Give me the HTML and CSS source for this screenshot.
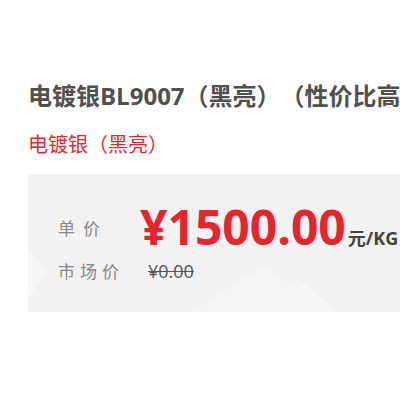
FILE: index.html
```html
<!DOCTYPE html>
<html lang="zh-CN">
<head>
  <meta charset="UTF-8" />
  <meta name="viewport" content="width=device-width, initial-scale=1.0"/>
  <title>电镀银BL9007</title>
  <link rel="stylesheet" href="styles.css">
</head>
<body>

  <div class="product">
    <h1 class="title">电镀银BL9007（黑亮）（性价比高）</h1>
    <p class="subtitle">电镀银（黑亮）</p>

    <div class="price-box">
      <svg class="deco" viewBox="0 0 372 138" preserveAspectRatio="none">
        <polygon points="0,73 19,97 0,125" fill="#f7f7f7" />
        <polygon points="162,138 235,93 307,138" fill="#f6f6f6" />
        <polygon points="240,138 277,110 310,138" fill="#f8f8f8" />
      </svg>
      <div class="row main">
        <span class="label wide">单价</span>
        <span class="amount"><span class="price">¥1500.00</span><span class="unit">元/KG</span></span>
      </div>
      <div class="row market">
        <span class="label">市场价</span>
        <span class="old-price">¥0.00</span>
      </div>
    </div>
  </div>

</body>
</html>
```

FILE: styles.css
```css
body {
  margin: 0;
  background: #fff;
  font-family: "Open Sans", "Noto Sans CJK SC", sans-serif;
  text-spacing-trim: space-all;
  overflow: hidden;
}
.product {
  padding: 78px 0 0 28px;
  white-space: nowrap;
  overflow: hidden;
}
.title {
  margin: 0;
  font-size: 24px;
  line-height: 36px;
  font-weight: bold;
  color: #505050;
}
.subtitle {
  margin: 16px 0 0;
  font-size: 20px;
  line-height: 30px;
  color: #dd2a33;
}
.price-box {
  position: relative;
  margin-top: 14px;
  height: 138px;
  padding: 29px 0 0 30px;
  box-sizing: border-box;
  background: #f2f2f2;
}
.deco {
  position: absolute;
  left: 0;
  top: 0;
  width: 372px;
  height: 138px;
}
.row {
  position: relative;
  display: flex;
  align-items: baseline;
}
.row.main {
  align-items: center;
  height: 48px;
}
.row.market {
  margin-top: 7px;
}
.label {
  width: 90px;
  font-size: 17px;
  color: #888;
  letter-spacing: 5px;
}
.label.wide {
  width: 82px;
  letter-spacing: 8px;
}
.price {
  font-size: 48px;
  line-height: 48px;
  font-weight: bold;
  color: #e8232b;
}
.unit {
  margin-left: 2px;
  font-size: 18px;
  font-weight: bold;
  color: #444;
}
.old-price {
  font-size: 18px;
  color: #555;
  text-decoration: line-through;
}
```
